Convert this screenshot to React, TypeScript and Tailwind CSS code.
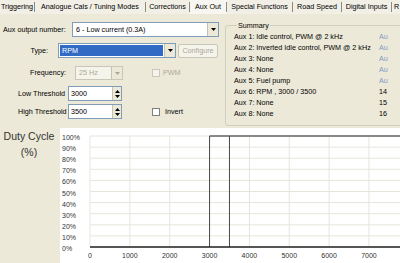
import React from 'react'

const tabs = [
  { label: 'Triggering', w: 'w-[35px]', active: false },
  { label: 'Analogue Cals / Tuning Modes', w: 'w-[111px]', active: false },
  { label: 'Corrections', w: 'w-[44px]', active: false },
  { label: 'Aux Out', w: 'w-[37px]', active: true },
  { label: 'Special Functions', w: 'w-[66px]', active: false },
  { label: 'Road Speed', w: 'w-[49px]', active: false },
  { label: 'Digital Inputs', w: 'w-[50px]', active: false },
  { label: 'R', w: 'w-[10px]', active: false },
]

const summary = [
  { text: 'Aux 1: Idle control, PWM @ 2 kHz', right: 'Au', link: true },
  { text: 'Aux 2: Inverted Idle control, PWM @ 2 kHz', right: 'Au', link: true },
  { text: 'Aux 3: None', right: 'Au', link: true },
  { text: 'Aux 4: None', right: 'Au', link: true },
  { text: 'Aux 5: Fuel pump', right: 'Au', link: true },
  { text: 'Aux 6: RPM , 3000 / 3500', right: '14', link: false },
  { text: 'Aux 7: None', right: '15', link: false },
  { text: 'Aux 8: None', right: '16', link: false },
]

function DropArrow({ disabled }: { disabled?: boolean }) {
  return (
    <div className="w-[11px] h-full shrink-0 bg-[#ece9d8] border-l border-[#c5c2b2] flex items-center justify-center">
      <svg width="5" height="3" viewBox="0 0 5 3">
        <path d="M0 0H5L2.5 3Z" fill={disabled ? '#aca899' : '#000'} />
      </svg>
    </div>
  )
}

function SpinArrows() {
  return (
    <div className="w-[9px] h-full shrink-0 bg-[#ece9d8] border-l border-[#c5c2b2] flex flex-col items-center justify-center gap-[2px]">
      <svg width="5" height="3" viewBox="0 0 5 3">
        <path d="M0 3H5L2.5 0Z" fill="#000" />
      </svg>
      <svg width="5" height="3" viewBox="0 0 5 3">
        <path d="M0 0H5L2.5 3Z" fill="#000" />
      </svg>
    </div>
  )
}

function DutyChart() {
  const left = 30
  const top = 8
  const step = 11.1
  const perK = 39.85
  const ys = Array.from({ length: 11 }, (_, i) => top + i * step)
  const xs = Array.from({ length: 9 }, (_, i) => left + i * perK)
  const bottom = top + 10 * step
  return (
    <svg width="340" height="135" viewBox="0 0 340 135" className="block">
      {ys.map((y) => (
        <line key={y} x1={left} x2={340} y1={y} y2={y} stroke="#e6e5dc" strokeWidth="1" />
      ))}
      {xs.map((x) => (
        <line key={x} x1={x} x2={x} y1={top} y2={bottom} stroke="#e6e5dc" strokeWidth="1" />
      ))}
      {ys.map((y, i) => (
        <text
          key={'l' + i}
          x={2}
          y={y + 1.5}
          dominantBaseline="central"
          fontSize="7"
          fill="#333"
          fontFamily="Liberation Sans, Arial, sans-serif"
        >
          {100 - i * 10}%
        </text>
      ))}
      {xs.slice(0, 8).map((x, i) => (
        <text
          key={'x' + i}
          x={x}
          y={129.5}
          textAnchor="middle"
          fontSize="7"
          fill="#333"
          fontFamily="Liberation Sans, Arial, sans-serif"
        >
          {i * 1000}
        </text>
      ))}
      <line x1={left + 3 * perK} x2={340} y1={top} y2={top} stroke="#666" strokeWidth="1.5" />
      <line x1={left + 3 * perK} x2={left + 3 * perK} y1={top} y2={bottom} stroke="#4a4a4a" strokeWidth="1" />
      <line x1={left + 3.5 * perK} x2={left + 3.5 * perK} y1={top} y2={bottom} stroke="#4a4a4a" strokeWidth="1" />
      <line x1={left} x2={340} y1={bottom} y2={bottom} stroke="#222" strokeWidth="1.5" />
    </svg>
  )
}

export default function App() {
  return (
    <div className="w-[400px] h-[263px] overflow-hidden bg-[#ece9d8] font-['Liberation_Sans',Arial,sans-serif] text-[7.2px] leading-none text-black whitespace-nowrap flex flex-col">
      {/* tab strip */}
      <div className="h-[14px] shrink-0 flex items-center bg-[#f1efe6]">
        {tabs.map((t) => (
          <div
            key={t.label}
            className={
              t.active
                ? 'h-full shrink-0 flex items-center justify-center bg-[#f7f6f1] ' + t.w
                : 'h-full shrink-0 flex items-center justify-center ' + t.w
            }
          >
            <span className="flex-1 text-center">{t.label}</span>
            <span className="w-px h-[10px] bg-[#8d8b80]" />
          </div>
        ))}
      </div>

      {/* settings + summary */}
      <div className="h-[114px] shrink-0 flex">
        <div className="w-[225px] shrink-0 flex flex-col">
          <div className="mt-[8px] h-[15px] flex items-center">
            <div className="w-[72px] pl-[3px]">Aux output number:</div>
            <div className="w-[147px] h-full flex bg-white border border-[#7f9db9]">
              <div className="flex-1 flex items-center pl-[3px]">6 - Low current (0.3A)</div>
              <DropArrow />
            </div>
          </div>

          <div className="mt-[6px] h-[15px] flex items-center">
            <div className="w-[58px] pr-[10px] text-right">Type:</div>
            <div className="w-[118px] h-full flex bg-white border border-[#7f9db9]">
              <div className="flex-1 m-[1px] flex items-center pl-[2px] bg-[#316ac5] text-white">RPM</div>
              <DropArrow />
            </div>
            <div className="ml-[2px] w-[40px] h-[14px] flex items-center justify-center border border-[#c9c7ba] rounded-[2px] bg-[#f5f4ea] text-[#aca899]">
              Configure
            </div>
          </div>

          <div className="mt-[8px] h-[14px] flex items-center">
            <div className="w-[75px] pr-[9px] text-right">Frequency:</div>
            <div className="w-[48px] h-full flex bg-[#f5f4ea] border border-[#c9c7ba] text-[#aca899]">
              <div className="flex-1 flex items-center pl-[3px]">25 Hz</div>
              <DropArrow disabled />
            </div>
            <div className="ml-[29px] w-[8px] h-[8px] border border-[#c9c7ba] bg-[#f5f4ea]" />
            <div className="ml-[3px] text-[#aca899]">PWM</div>
          </div>

          <div className="mt-[6px] h-[15px] flex items-center">
            <div className="w-[68px] pl-[18px]">Low Threshold</div>
            <div className="w-[54px] h-full flex bg-white border border-[#7f9db9]">
              <div className="flex-1 flex items-center pl-[2px]">3000</div>
              <SpinArrows />
            </div>
          </div>

          <div className="mt-[3px] h-[15px] flex items-center">
            <div className="w-[68px] pl-[18px]">High Threshold</div>
            <div className="w-[54px] h-full flex bg-white border border-[#7f9db9]">
              <div className="flex-1 flex items-center pl-[2px]">3500</div>
              <SpinArrows />
            </div>
            <div className="ml-[30px] w-[8px] h-[8px] border border-[#7f7f7f] bg-white" />
            <div className="ml-[5px]">Invert</div>
          </div>
        </div>

        <fieldset className="flex-1 mt-[7px] h-[105px] border border-[#d0d0bf] rounded-[3px] mr-[-6px] pl-[8px]">
          <legend className="ml-[3px] px-[1px] leading-[9px]">Summary</legend>
          <div className="pt-[1px] flex flex-col">
            {summary.map((s) => (
              <div key={s.text} className="h-[11px] flex items-center">
                <div className="w-[145px]">{s.text}</div>
                <div className={s.link ? 'text-[#8799c4]' : ''}>{s.right}</div>
              </div>
            ))}
          </div>
        </fieldset>
      </div>

      {/* chart */}
      <div className="flex-1 flex">
        <div className="w-[60px] shrink-0 text-[10.5px] leading-[16px] text-[#333] text-center pr-[2px]">
          <div>Duty Cycle</div>
          <div>(%)</div>
        </div>
        <div className="flex-1 bg-white">
          <DutyChart />
        </div>
      </div>
    </div>
  )
}
